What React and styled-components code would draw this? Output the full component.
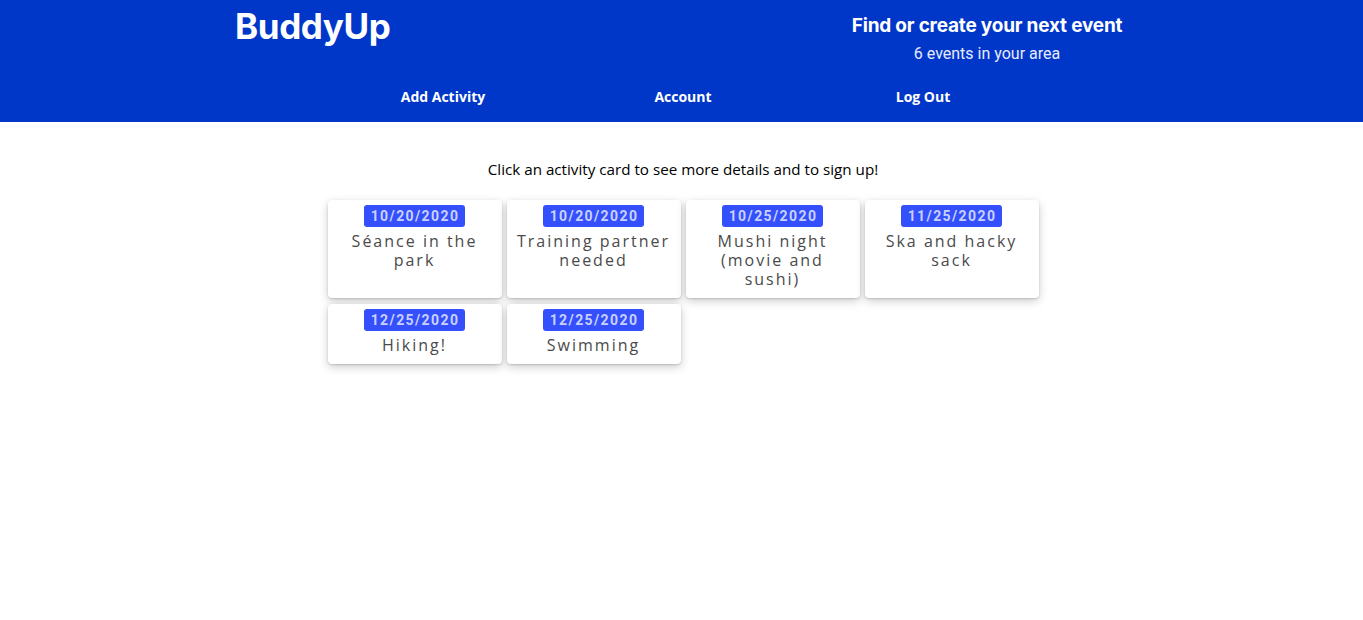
import React from "react";
import styled, { createGlobalStyle } from "styled-components";

const activities = [
  { id: 1, date: "10/20/2020", title: "Séance in the park" },
  { id: 2, date: "10/20/2020", title: "Training partner needed" },
  { id: 3, date: "10/25/2020", title: "Mushi night (movie and sushi)" },
  { id: 4, date: "11/25/2020", title: "Ska and hacky sack" },
  { id: 5, date: "12/25/2020", title: "Hiking!" },
  { id: 6, date: "12/25/2020", title: "Swimming" },
];

const App = () => {
  return (
    <>
      <GlobalStyle />
      <Header>
        <TopRow>
          <Logo>BuddyUp</Logo>
          <Tagline>
            <TagTitle>Find or create your next event</TagTitle>
            <TagCount>{activities.length} events in your area</TagCount>
          </Tagline>
        </TopRow>
        <Nav>
          <NavItem>Add Activity</NavItem>
          <NavItem>Account</NavItem>
          <NavItem>Log Out</NavItem>
        </Nav>
      </Header>
      <Main>
        <Hint>Click an activity card to see more details and to sign up!</Hint>
        <Grid>
          {activities.map((a) => (
            <Card key={a.id}>
              <DateBadge>{a.date}</DateBadge>
              <Title>{a.title}</Title>
            </Card>
          ))}
        </Grid>
      </Main>
    </>
  );
};

export default App;

const GlobalStyle = createGlobalStyle`
  body {
    margin: 0;
    background: #fff;
    font-family: "Open Sans", "Noto Sans", sans-serif;
  }
`;

const Header = styled.header`
  background-color: #0037c9;
  height: 122px;
  color: #fff;
`;

const TopRow = styled.div`
  display: flex;
  align-items: flex-start;
  padding-left: 235px;
`;

const Logo = styled.div`
  font-family: "Inter", "Noto Sans", sans-serif;
  font-weight: 700;
  font-size: 35px;
  letter-spacing: -0.4px;
  line-height: 52px;
  width: 610px;
`;

const Tagline = styled.div`
  width: 284px;
  text-align: center;
  padding-top: 13px;
`;

const TagTitle = styled.div`
  font-family: "Inter", "Noto Sans", sans-serif;
  font-weight: 700;
  font-size: 19px;
  letter-spacing: -0.2px;
  line-height: 26px;
`;

const TagCount = styled.div`
  font-family: Roboto, sans-serif;
  font-size: 16px;
  line-height: 20px;
  margin-top: 5px;
  color: #e8ecff;
`;

const Nav = styled.nav`
  display: flex;
  justify-content: center;
  padding-left: 3px;
  margin-top: 23px;
`;

const NavItem = styled.div`
  width: 240px;
  text-align: center;
  font-family: "Open Sans", "Noto Sans", sans-serif;
  font-weight: 700;
  font-size: 14px;
  line-height: 20px;
  cursor: pointer;
`;

const Main = styled.main`
  display: flex;
  flex-direction: column;
  align-items: center;
  padding: 36px 0 40px 3px;
`;

const Hint = styled.p`
  margin: 0 0 19px;
  font-family: "Open Sans", "Noto Sans", sans-serif;
  font-size: 15.2px;
  line-height: 23px;
  color: #000;
`;

const Grid = styled.div`
  display: grid;
  grid-template-columns: repeat(4, 174px);
  gap: 6px 5px;
`;

const Card = styled.div`
  background: #fff;
  border-radius: 4px;
  box-shadow: 0 3px 10px rgba(0, 0, 0, 0.2), 0 1px 2px rgba(0, 0, 0, 0.15);
  padding: 5px 10px 9px;
  display: flex;
  flex-direction: column;
  align-items: center;
  cursor: pointer;
`;

const DateBadge = styled.span`
  background-color: #344ffc;
  color: #c9d1ff;
  border-radius: 3px;
  font-family: Roboto, sans-serif;
  font-weight: 700;
  font-size: 14px;
  letter-spacing: 1.4px;
  line-height: 22px;
  padding: 0 6px 0 7px;
`;

const Title = styled.div`
  margin-top: 5px;
  text-align: center;
  font-family: "Open Sans", "Noto Sans", sans-serif;
  font-size: 16px;
  letter-spacing: 2px;
  line-height: 19px;
  color: #4a4a4a;
`;
